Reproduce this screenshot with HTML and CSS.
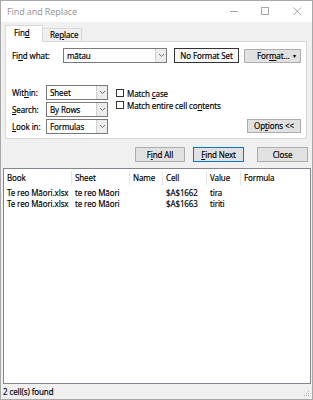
FILE: index.html
```
<!DOCTYPE html>
<html lang="en">
  <head>
    <meta charset="UTF-8" />
    <meta name="viewport" content="width=device-width, initial-scale=1.0" />
    <title>Find and Replace</title>
    <link rel="stylesheet" href="styles.css">
  </head>
  <body>
    <div class="window">
      <div class="titlebar">
        <span class="title">Find and Replace</span>
        <div class="controls">
          <svg class="ctl ctl-min" width="9" height="9" viewBox="0 0 9 9"><path d="M0 4.5H8" stroke="#a6a6a6" stroke-width="1"/></svg>
          <svg class="ctl ctl-max" width="9" height="9" viewBox="0 0 9 9"><rect x="0.5" y="0.5" width="7" height="7" fill="none" stroke="#a6a6a6"/></svg>
          <svg class="ctl ctl-close" width="9" height="9" viewBox="0 0 9 9"><path d="M0.5 0.5L8 8M8 0.5L0.5 8" stroke="#a6a6a6"/></svg>
        </div>
      </div>

      <div class="body">
        <div class="tabs">
          <div class="tab active">Fin<u>d</u></div>
          <div class="tab">Re<u>p</u>lace</div>
        </div>

        <div class="panel">
          <div class="find-row">
            <label class="find-label">Fi<u>n</u>d what:</label>
            <div class="combo combo-find">
              <span class="combo-text">mātau</span>
              <span class="combo-arrow"><svg width="5" height="3" viewBox="0 0 5 3"><path d="M0 0L2.5 2.5L5 0" fill="none" stroke="#707070"/></svg></span>
            </div>
            <button class="btn btn-noformat">No Format Set</button>
            <button class="btn btn-format">For<u>m</u>at... <span class="caret">&#9662;</span></button>
          </div>

          <div class="options">
            <div class="opt-grid">
              <label>Wit<u>h</u>in:</label>
              <div class="combo combo-small">
                <span class="combo-text">Sheet</span>
                <span class="combo-arrow"><svg width="5" height="3" viewBox="0 0 5 3"><path d="M0 0L2.5 2.5L5 0" fill="none" stroke="#707070"/></svg></span>
              </div>
              <label><u>S</u>earch:</label>
              <div class="combo combo-small">
                <span class="combo-text">By Rows</span>
                <span class="combo-arrow"><svg width="5" height="3" viewBox="0 0 5 3"><path d="M0 0L2.5 2.5L5 0" fill="none" stroke="#707070"/></svg></span>
              </div>
              <label><u>L</u>ook in:</label>
              <div class="combo combo-small">
                <span class="combo-text">Formulas</span>
                <span class="combo-arrow"><svg width="5" height="3" viewBox="0 0 5 3"><path d="M0 0L2.5 2.5L5 0" fill="none" stroke="#707070"/></svg></span>
              </div>
            </div>

            <div class="checks">
              <div class="check"><span class="box"></span><span>Match <u>c</u>ase</span></div>
              <div class="check"><span class="box"></span><span>Match entire cell co<u>n</u>tents</span></div>
            </div>

            <button class="btn btn-options">Op<u>t</u>ions &lt;&lt;</button>
          </div>
        </div>

        <div class="actions">
          <button class="btn btn-findall">F<u>i</u>nd All</button>
          <button class="btn btn-findnext"><u>F</u>ind Next</button>
          <button class="btn btn-close">Close</button>
        </div>
      </div>

      <div class="results">
        <table>
          <colgroup>
            <col style="width: 68px">
            <col style="width: 58px">
            <col style="width: 33px">
            <col style="width: 44px">
            <col style="width: 34px">
            <col>
          </colgroup>
          <thead>
            <tr>
              <th><span>Book</span></th>
              <th><span>Sheet</span></th>
              <th><span>Name</span></th>
              <th><span>Cell</span></th>
              <th><span>Value</span></th>
              <th><span>Formula</span></th>
            </tr>
          </thead>
          <tbody>
            <tr>
              <td>Te reo Māori.xlsx</td>
              <td>te reo Māori</td>
              <td></td>
              <td>$A$1662</td>
              <td>tira</td>
              <td></td>
            </tr>
            <tr>
              <td>Te reo Māori.xlsx</td>
              <td>te reo Māori</td>
              <td></td>
              <td>$A$1663</td>
              <td>tiriti</td>
              <td></td>
            </tr>
          </tbody>
        </table>
      </div>

      <div class="status">
        <span>2 cell(s) found</span>
        <svg class="grip" width="6" height="6" viewBox="0 0 6 6">
          <rect x="4" y="0" width="1" height="1" fill="#b0b0b0"/>
          <rect x="2" y="2" width="1" height="1" fill="#b0b0b0"/>
          <rect x="4" y="2" width="1" height="1" fill="#b0b0b0"/>
          <rect x="0" y="4" width="1" height="1" fill="#b0b0b0"/>
          <rect x="2" y="4" width="1" height="1" fill="#b0b0b0"/>
          <rect x="4" y="4" width="1" height="1" fill="#b0b0b0"/>
        </svg>
      </div>
    </div>
  </body>
</html>
```

FILE: styles.css
```
body {
  margin: 0;
  font-family: "Noto Sans", sans-serif;
  font-size: 8px;
  letter-spacing: -0.12px;
  color: #000;
  -webkit-text-stroke: 0.15px #000;
}
.window {
  width: 313px;
  height: 400px;
  box-sizing: border-box;
  border: 1px solid #a8a8a8;
  background-color: #f0f0f0;
  display: flex;
  flex-direction: column;
}
.titlebar {
  height: 21px;
  flex: none;
  background-color: #fff;
  display: flex;
  align-items: center;
  justify-content: space-between;
  padding-left: 6px;
}
.title {
  font-size: 9px;
  color: #9a9a9a;
  -webkit-text-stroke: 0;
}
.controls {
  display: flex;
  align-items: center;
}
.ctl {
  display: block;
}
.ctl-min {
  margin-right: 22px;
}
.ctl-max {
  margin-right: 23px;
}
.ctl-close {
  margin-right: 10px;
}
.body {
  flex: none;
}
.tabs {
  display: flex;
  align-items: flex-end;
  margin: 3px 0 0 4px;
  height: 16px;
}
.tab {
  box-sizing: border-box;
  height: 13px;
  padding: 0 7px;
  border: 1px solid #d9d9d9;
  border-bottom: none;
  line-height: 12px;
  background-color: #f0f0f0;
}
.tab.active {
  height: 17px;
  width: 38px;
  padding-left: 8px;
  background-color: #fff;
  position: relative;
  top: 1px;
  line-height: 14px;
}
.tab + .tab {
  border-left: none;
  width: 39px;
}
.panel {
  margin: 0 5px 0 4px;
  height: 98px;
  box-sizing: border-box;
  border: 1px solid #d9d9d9;
  background-color: #fff;
  padding: 6px 5px 0 6px;
}
.find-row {
  display: flex;
  align-items: center;
}
.find-label {
  width: 51px;
}
.combo {
  box-sizing: border-box;
  height: 15px;
  border: 1px solid #7a7a7a;
  background-color: #fff;
  display: flex;
  align-items: stretch;
}
.combo-text {
  flex: 1;
  padding-left: 3px;
  line-height: 13px;
}
.combo-arrow {
  width: 10px;
  background-color: #ededed;
  border-left: 1px solid #cfcfcf;
  display: flex;
  align-items: center;
  justify-content: center;
}
.combo-arrow svg {
  display: block;
}
.combo-find {
  width: 104px;
}
.combo-small {
  width: 62px;
}
.btn {
  font-family: inherit;
  font-size: 8px;
  letter-spacing: inherit;
  color: #000;
  box-sizing: border-box;
  height: 15px;
  padding: 0;
  border: 1px solid #adadad;
  background-color: #e1e1e1;
  line-height: 12px;
}
.btn-noformat {
  width: 65px;
  margin-left: 7px;
  background-color: #f7f7f7;
  border-color: #333;
}
.btn-format {
  width: 57px;
  height: 14px;
  margin-left: 5px;
  text-align: left;
  padding-left: 12px;
  position: relative;
}
.caret {
  position: absolute;
  right: 4px;
  top: 0;
  font-size: 6px;
}
.options {
  margin-top: 22px;
  display: flex;
  align-items: flex-start;
}
.opt-grid {
  display: grid;
  grid-template-columns: 34px 62px;
  row-gap: 2px;
  align-items: center;
}
.checks {
  margin-left: 8px;
  padding-top: 2px;
  display: flex;
  flex-direction: column;
}
.check {
  display: flex;
  align-items: center;
  height: 12px;
}
.box {
  width: 8px;
  height: 8px;
  box-sizing: border-box;
  border: 1px solid #333;
  background-color: #fff;
  margin-right: 3px;
}
.btn-options {
  margin-left: auto;
  margin-top: 34px;
  width: 54px;
  height: 14px;
}
.actions {
  display: flex;
  justify-content: flex-end;
  margin: 8px 4px 0 0;
}
.btn-findall {
  width: 50px;
}
.btn-findnext {
  width: 51px;
  margin-left: 8px;
  border-color: #0078d7;
}
.btn-close {
  width: 51px;
  margin-left: 13px;
}
.results {
  margin: 6px 1px 0 2px;
  height: 216px;
  box-sizing: border-box;
  border: 1px solid #828790;
  background-color: #fff;
  flex: none;
}
table {
  border-collapse: collapse;
  table-layout: fixed;
  width: 100%;
}
th {
  font-weight: normal;
  text-align: left;
  height: 18px;
  padding: 0;
  white-space: nowrap;
}
th span {
  display: block;
  height: 14px;
  line-height: 14px;
  padding-left: 3px;
  border-right: 1px solid #e5e5e5;
}
th:last-child span {
  border-right: none;
}
td {
  height: 11px;
  padding: 0 0 0 3px;
  white-space: nowrap;
  overflow: hidden;
  line-height: 11px;
}
.status {
  flex: 1;
  display: flex;
  align-items: center;
  justify-content: space-between;
  padding: 0 2px 0 2px;
}
.grip {
  align-self: flex-end;
  margin-bottom: 2px;
}
```
